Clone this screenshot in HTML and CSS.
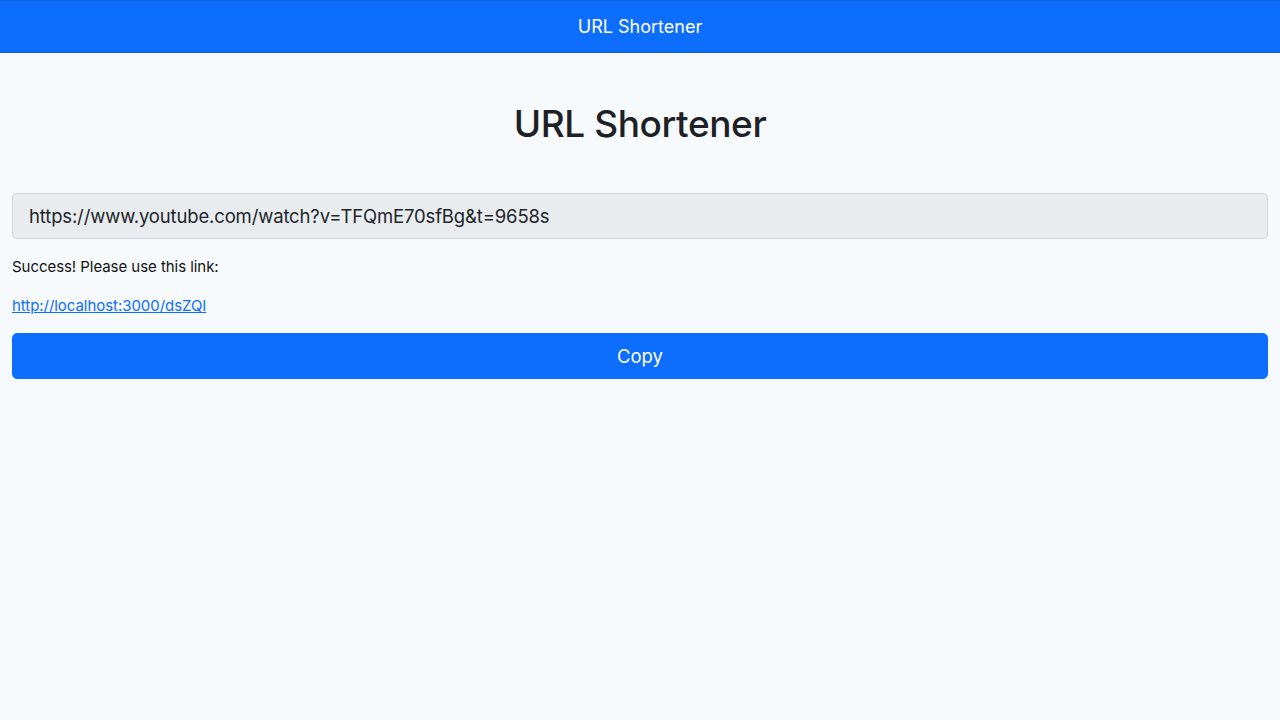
FILE: index.html
```html
<!DOCTYPE html>
<html lang="en">
<head>
<meta charset="utf-8">
<title>URL Shortener</title>
<link rel="stylesheet" href="styles.css">
</head>
<body>
<nav class="navbar"><span class="brand">URL Shortener</span></nav>
<main class="container">
  <h1 class="title">URL Shortener</h1>
  <input class="url-input" type="text" readonly value="https://www.youtube.com/watch?v=TFQmE70sfBg&amp;t=9658s">
  <p class="message message-first">Success! Please use this link:</p>
  <p class="message"><a class="short-link" href="#">http://localhost:3000/dsZQI</a></p>
  <button class="copy-btn" type="button">Copy</button>
</main>
</body>
</html>
```
FILE: styles.css
```css
* { box-sizing: border-box; }
html, body { margin: 0; padding: 0; }
body {
  background: #f7fafd;
  color: #212529;
  font-family: Inter, "Noto Sans", sans-serif;
  font-size: 16px;
  line-height: 1.5;
  height: 720px;
}
.navbar {
  background: #0d6efd;
  height: 53px;
  border-top: 1px solid #0a62e6;
  border-bottom: 1px solid #0b5fd8;
  display: flex;
  align-items: center;
  justify-content: center;
}
.brand {
  color: #fff;
  font-size: 18px;
  line-height: 1;
}
.container {
  padding: 0 12px;
  display: flex;
  flex-direction: column;
}
.title {
  margin: 49px 0 47px;
  text-align: center;
  font-size: 37px;
  letter-spacing: -0.4px;
  font-weight: 500;
  line-height: 1.2;
  color: #1d2125;
}
.url-input {
  width: 100%;
  height: 46px;
  padding: 0 16px;
  font-family: inherit;
  font-size: 18.5px;
  letter-spacing: -0.15px;
  color: #212529;
  background: #e9ecef;
  border: 1px solid #ced4da;
  border-radius: 5px;
  outline: none;
}
.message {
  margin: 16px 0 0;
  font-size: 15px;
  letter-spacing: -0.05px;
  color: #111;
}
.message-first {
  margin-top: 17px;
}
.short-link {
  color: #0d6efd;
  text-decoration: underline;
}
.copy-btn {
  margin-top: 16px;
  width: 100%;
  height: 46px;
  font-family: inherit;
  font-size: 18.5px;
  color: #fff;
  background: #0d6efd;
  border: 1px solid #0d6efd;
  border-radius: 5px;
  cursor: pointer;
}
```
